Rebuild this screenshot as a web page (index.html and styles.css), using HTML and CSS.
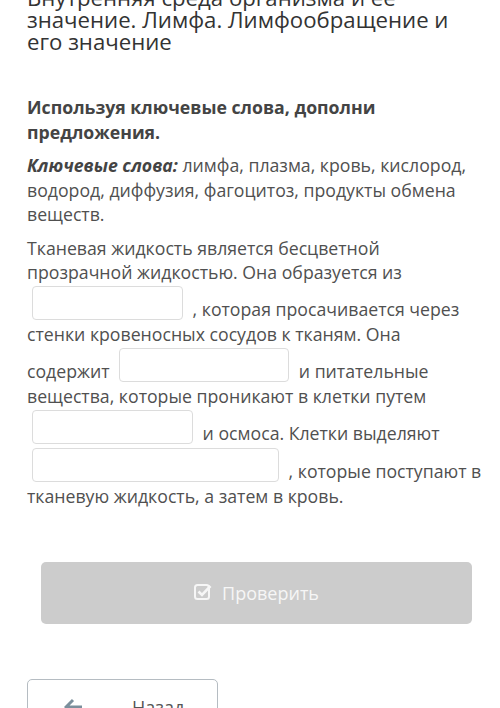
FILE: index.html
```html
<!DOCTYPE html>
<html lang="ru">
<head>
    <meta charset="UTF-8">
    <meta name="viewport" content="width=device-width, initial-scale=1.0">
    <title>Лимфа. Лимфообращение</title>
    <link rel="stylesheet" href="styles.css">
</head>
<body>
    <div class="page">
        <h1 class="lesson-title">Внутренняя среда организма и ее значение. Лимфа. Лимфообращение и его значение</h1>

        <div class="task">
            <p class="task-question">Используя ключевые слова, дополни предложения.</p>
            <p class="task-keywords"><em>Ключевые слова:</em> лимфа, плазма, кровь, кислород, водород, диффузия, фагоцитоз, продукты обмена веществ.</p>
            <p class="task-text">Тканевая жидкость является бесцветной прозрачной жидкостью. Она образуется из <span class="blank blank-1"></span> , которая просачивается через стенки кровеносных сосудов к тканям. Она содержит <span class="blank blank-2"></span> и питательные вещества, которые проникают в клетки путем <span class="blank blank-3"></span> и осмоса. Клетки выделяют <span class="blank blank-4"></span> , которые поступают в тканевую жидкость, а затем в кровь.</p>
        </div>

        <button class="check-button" disabled>
            <svg class="check-icon" viewBox="0 0 18 17" width="18" height="17">
                <rect x="1" y="2" width="14" height="14" rx="2.5" fill="none" stroke="currentColor" stroke-width="2"/>
                <path d="M4.5 8.5l3.5 3.5 8.5-9" fill="none" stroke="currentColor" stroke-width="2.6"/>
            </svg>
            Проверить
        </button>

        <div class="lesson-nav">
            <button class="back-button">
                <svg class="back-icon" viewBox="0 0 20 20" width="20" height="20">
                    <path d="M9 3L2 10l7 7M2.5 10H18" fill="none" stroke="currentColor" stroke-width="3"/>
                </svg>
                Назад
            </button>
        </div>
    </div>
</body>
</html>
```

FILE: styles.css
```css
* {
    margin: 0;
    padding: 0;
    box-sizing: border-box;
}

body {
    font-family: "Open Sans", "Noto Sans", sans-serif;
    background: #fff;
    color: #505050;
    overflow: hidden;
}

.page {
    padding: 0 15px 0 27px;
}

.lesson-title {
    font-size: 22.2px;
    font-weight: 400;
    line-height: 22px;
    color: #333;
    margin-top: -13px;
    margin-right: 13px;
}

.task {
    margin-top: 42px;
}

.task-question {
    font-size: 17.7px;
    font-weight: 700;
    line-height: 25px;
    color: #444;
}

.task-keywords {
    margin-top: 8px;
    font-size: 17.7px;
    line-height: 24.5px;
}

.task-keywords em {
    font-weight: 700;
    color: #444;
}

.task-text {
    margin-top: 9px;
    font-size: 17.7px;
    line-height: 24px;
}

.blank {
    display: inline-block;
    height: 34px;
    margin: 2px 5px;
    vertical-align: -6px;
    border: 1px solid #dcdcdc;
    border-radius: 4px;
    background: #fff;
}

.blank-1 { width: 151px; }
.blank-2 { width: 170px; }
.blank-3 { width: 161px; }
.blank-4 { width: 247px; }

.check-button {
    display: flex;
    align-items: center;
    justify-content: center;
    gap: 10px;
    width: 431px;
    height: 62px;
    margin: 54px 0 0 14px;
    border: none;
    border-radius: 5px;
    background: #cccccc;
    color: #f6f6f6;
    font-family: inherit;
    font-size: 18px;
}

.check-icon {
    margin-top: -3px;
}

.lesson-nav {
    margin-top: 55px;
}

.back-button {
    display: flex;
    align-items: center;
    gap: 48px;
    width: 191px;
    height: 56px;
    padding: 0 0 0 36px;
    border: 1px solid #b5bcc2;
    border-radius: 5px;
    background: #fff;
    color: #555;
    font-family: inherit;
    font-size: 18px;
}

.back-icon {
    color: #7b8f9c;
}
```
